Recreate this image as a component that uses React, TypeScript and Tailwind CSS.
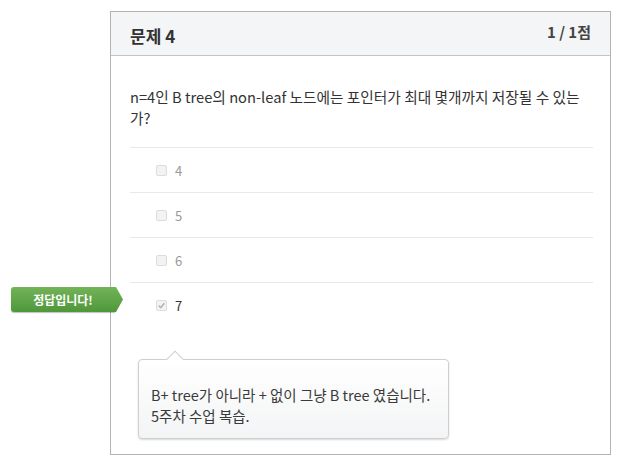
const font = { fontFamily: '"Noto Sans CJK KR", "Open Sans", sans-serif' };

const options = [
  { label: "4", checked: false },
  { label: "5", checked: false },
  { label: "6", checked: false },
  { label: "7", checked: true },
];

function Box({ checked }: { checked: boolean }) {
  return (
    <span className="flex h-[11px] w-[11px] items-center justify-center rounded-[2px] border border-[#dcdcdc] bg-[#f3f3f3]">
      {checked && (
        <svg width="9" height="9" viewBox="0 0 10 10">
          <path d="M2 5.2 L4.2 7.3 L8.2 2.6" fill="none" stroke="#b5b5b5" strokeWidth="1.8" />
        </svg>
      )}
    </span>
  );
}

export default function App() {
  return (
    <div className="relative h-[467px] w-[623px] bg-white pt-[11px] pl-[110px]" style={font}>
      <div className="w-[501px] border border-[#b3b3b3] bg-white">
        <div className="flex h-[44px] items-center justify-between border-b border-[#c4c4c4] bg-[#f4f5f6] pl-[19px] pr-[19px]">
          <h3 className="pt-[4px] text-[17px] font-bold text-[#333]">문제 4</h3>
          <span className="pb-[3px] text-[15px] font-bold text-[#444]">1 / 1점</span>
        </div>
        <div className="pl-[19px] pr-[17px] pt-[30px] pb-[15px]">
          <p className="text-[14.7px] leading-[21px] text-[#333]">
            <span className="whitespace-nowrap">n=4인 B tree의 non-leaf 노드에는 포인터가 최대 몇개까지 저장될 수 있는</span>
            <br />
            가?
          </p>
          <ul className="mt-[19px]">
            {options.map((o) => (
              <li
                key={o.label}
                className="flex h-[45px] items-center gap-[8px] border-t border-[#e8e8e8] pl-[26px] pt-[1px]"
              >
                <Box checked={o.checked} />
                <span className={"text-[13px] " + (o.checked ? "text-[#333]" : "text-[#9a9a9a]")}>{o.label}</span>
              </li>
            ))}
          </ul>
          <div className="relative ml-[8px] mt-[32px] w-[311px] rounded-[4px] border border-[#cfcfcf] bg-gradient-to-b from-white to-[#f3f4f5] px-[12px] pt-[24px] pb-[12px] text-[14.5px] leading-[21px] text-[#3a3a3a] shadow-[0_1px_2px_rgba(0,0,0,0.15)]">
            <span className="absolute -top-[7px] left-[30px] h-[12px] w-[12px] rotate-45 border-l border-t border-[#cfcfcf] bg-white" />
            <p>B+ tree가 아니라 + 없이 그냥 B tree 였습니다.</p>
            <p>5주차 수업 복습.</p>
          </div>
        </div>
      </div>

      {/* correct-answer flag */}
      <div className="absolute left-[11px] top-[287px] flex h-[25px]">
        <div className="flex w-[104px] items-center justify-center rounded-l-[3px] bg-gradient-to-b from-[#72b457] to-[#4f973b] text-[12px] font-bold text-white shadow-[0_1px_1px_rgba(0,0,0,0.25)]">
          정답입니다!
        </div>
        <svg width="8" height="25" viewBox="0 0 8 25" className="block">
          <defs>
            <linearGradient id="flag" x1="0" y1="0" x2="0" y2="1">
              <stop offset="0" stopColor="#72b457" />
              <stop offset="1" stopColor="#4f973b" />
            </linearGradient>
          </defs>
          <path d="M0 0 L1 0 L8 12.5 L1 25 L0 25 Z" fill="url(#flag)" />
        </svg>
      </div>
    </div>
  );
}
